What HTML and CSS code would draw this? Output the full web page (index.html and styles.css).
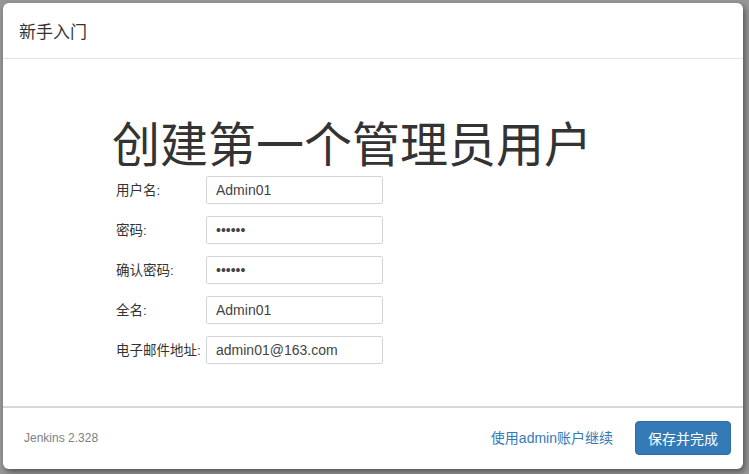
FILE: index.html
```html
<!DOCTYPE html>
<html lang="zh-CN">
<head>
<meta charset="utf-8">
<title>新手入门</title>
<link rel="stylesheet" href="styles.css">
</head>
<body>
<div class="modal">
  <div class="modal-header">
    <h4 class="modal-title">新手入门</h4>
  </div>
  <div class="modal-body">
    <div class="content">
      <h1 class="page-title">创建第一个管理员用户</h1>
      <form class="form">
        <div class="row">
          <label class="label">用户名:</label>
          <input class="field" type="text" value="Admin01">
        </div>
        <div class="row">
          <label class="label">密码:</label>
          <input class="field" type="password" value="123456">
        </div>
        <div class="row">
          <label class="label">确认密码:</label>
          <input class="field" type="password" value="123456">
        </div>
        <div class="row">
          <label class="label">全名:</label>
          <input class="field" type="text" value="Admin01">
        </div>
        <div class="row">
          <label class="label">电子邮件地址:</label>
          <input class="field" type="text" value="admin01@163.com">
        </div>
      </form>
    </div>
  </div>
  <div class="modal-footer">
    <span class="version">Jenkins 2.328</span>
    <div class="actions">
      <a class="link" href="#">使用admin账户继续</a>
      <button class="btn" type="button">保存并完成</button>
    </div>
  </div>
</div>
</body>
</html>
```
FILE: styles.css
```css
* { box-sizing: border-box; }
html, body { height: 100%; }
body {
  margin: 0;
  padding: 3px 6px 5px 3px;
  background: #979797;
  font-family: "Liberation Sans", "Noto Sans CJK SC", sans-serif;
  color: #333;
}
.modal {
  height: 466px;
  width: 740px;
  background: #fff;
  border-radius: 6px;
  box-shadow: 2px 3px 6px rgba(0,0,0,0.45);
  display: flex;
  flex-direction: column;
  overflow: hidden;
}
.modal-header {
  height: 56px;
  border-bottom: 1px solid #e5e5e5;
  display: flex;
  align-items: center;
  padding: 0 16px;
  flex: none;
}
.modal-title {
  margin: 0;
  font-size: 17px;
  font-weight: normal;
  color: #333;
  line-height: 1;
  padding-top: 4px;
}
.modal-body {
  flex: 1;
  padding: 0 0 0 109px;
}
.content {
  padding-top: 57px;
}
.page-title {
  margin: 0;
  font-size: 48px;
  font-weight: normal;
  line-height: 60px;
  color: #333;
  height: 60px;
}
.form {
  display: flex;
  flex-direction: column;
  gap: 12px;
}
.row {
  display: flex;
  align-items: center;
  height: 28px;
}
.label {
  width: 94px;
  padding-left: 4px;
  font-size: 13.5px;
  color: #333;
  white-space: nowrap;
  padding-bottom: 3px;
}
.field {
  width: 177px;
  height: 28px;
  border: 1px solid #d4d4d4;
  border-radius: 2px;
  padding: 0 9px;
  font-family: "Liberation Sans", sans-serif;
  font-size: 14px;
  color: #444;
  background: #fff;
  outline: none;
}
.modal-footer {
  height: 63px;
  border-top: 2px solid #d8d8d8;
  display: flex;
  align-items: center;
  justify-content: space-between;
  padding: 0 12px 0 21px;
  flex: none;
}
.version {
  font-size: 12px;
  color: #808080;
  padding-bottom: 2px;
}
.actions {
  display: flex;
  align-items: center;
  gap: 22px;
}
.link {
  font-size: 14px;
  color: #337ab7;
  text-decoration: none;
  padding-bottom: 3px;
}
.btn {
  height: 34px;
  padding: 0 12px;
  border: 1px solid #2e6da4;
  border-radius: 4px;
  background: #337ab7;
  color: #fff;
  font-family: "Liberation Sans", "Noto Sans CJK SC", sans-serif;
  font-size: 14px;
  margin-bottom: 1px;
}
```
